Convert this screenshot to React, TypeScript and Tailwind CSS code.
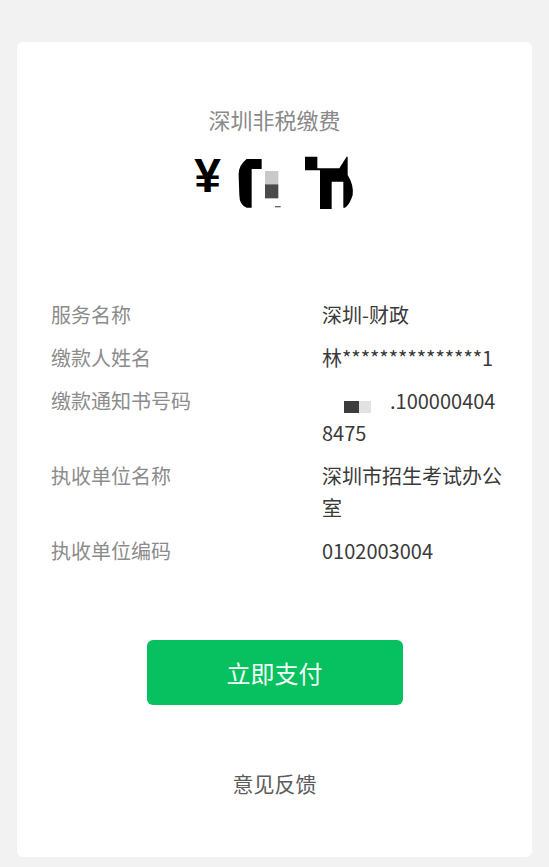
import React from 'react';

const rows = [
  { label: '服务名称', value: '深圳-财政' },
  { label: '缴款人姓名', value: '林***************1' },
  { label: '缴款通知书号码', value: null },
  { label: '执收单位名称', value: '深圳市招生考试办公室' },
  { label: '执收单位编码', value: '0102003004' },
];

// 金额被打了码，用几块色块大致还原
const MaskedAmount = () => (
  <svg width="132" height="60" viewBox="144 24 396 180" className="mt-[1px]">
    <path
      d="M200 42 L245 42 L245 72 L215 72 L215 188 L200 188 Q178 180 178 150 L176 92 Q174 62 200 42 Z"
      fill="#000"
    />
    <rect x="255" y="78" width="40" height="40" fill="#c9c9c9" />
    <rect x="255" y="118" width="40" height="42" fill="#4a4a4a" />
    <rect x="285" y="183" width="17" height="4" fill="#666" />
    <path
      d="M375 35 L412 35 L412 70 L478 70 L500 35 L503 35 L503 90 Q522 120 518 150 Q510 178 495 188 L490 188 L490 110 L455 110 L455 192 L420 192 L420 76 L375 76 Z"
      fill="#000"
    />
  </svg>
);

const NoticeNumber = () => (
  <div>
    <div className="flex items-start h-[32px]">
      <span className="w-[22px] shrink-0" />
      <span className="w-[15px] h-[12px] mt-[16px] bg-[#3c3c3c] shrink-0" />
      <span className="w-[12px] h-[12px] mt-[16px] bg-[#e2e2e2] shrink-0" />
      <span className="w-[19px] shrink-0" />
      <span>.100000404</span>
    </div>
    <div>8475</div>
  </div>
);

export default function App() {
  return (
    <div className="min-h-[867px] bg-[#f2f2f2] px-[17px] pt-[42px] pb-[10px] font-['Noto_Sans_CJK_SC','Noto_Sans',sans-serif]">
      <div className="bg-white rounded-[6px] w-[515px] h-[815px] flex flex-col pt-[62px]">
        <div className="text-center text-[22px] leading-[30px] text-[#8a8a8a]">深圳非税缴费</div>

        <div className="mt-[18px] flex justify-center items-start pl-[5px]">
          <span className="font-['Liberation_Sans',sans-serif] font-bold text-[48px] leading-none text-black">¥</span>
          <span className="w-[7px]" />
          <MaskedAmount />
        </div>

        <div className="mt-[86px] pl-[34px] pr-[10px] flex flex-col gap-[11px] text-[20px] leading-[32px]">
          {rows.map((row) => (
            <div key={row.label} className="flex">
              <div className="w-[271px] shrink-0 text-[#8c8c8c]">{row.label}</div>
              <div className="w-[181px] shrink-0 text-[#3a3a3a] break-all">
                {row.value ?? <NoticeNumber />}
              </div>
            </div>
          ))}
        </div>

        <button className="mt-[73px] mx-auto w-[256px] h-[65px] rounded-[6px] bg-[#07c160] text-[24px] text-[#f4fff8]">
          立即支付
        </button>

        <div className="mt-[63px] text-center text-[21px] leading-[30px] text-[#5c5c5c]">意见反馈</div>
      </div>
    </div>
  );
}
